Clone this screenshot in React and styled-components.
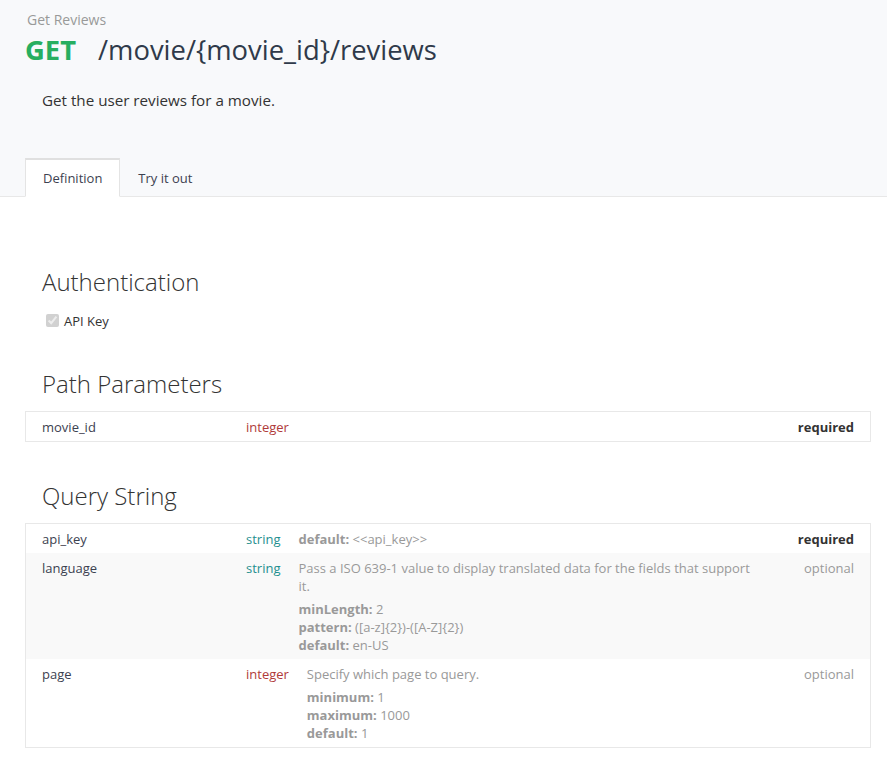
import React from "react";
import styled, { createGlobalStyle } from "styled-components";

const GlobalStyle = createGlobalStyle`
    html, body {
        margin: 0;
        padding: 0;
        background: #fff;
    }
    body {
        font-family: "Open Sans", "Liberation Sans", sans-serif;
        color: #333;
    }
`;

const Header = styled.div`
    background-color: #f8f9fb;
    border-bottom: 1px solid #e8e8e8;
    padding: 10px 0 0 0;
`;

const Crumb = styled.div`
    font-size: 14px;
    line-height: 20px;
    color: #999;
    padding-left: 27px;
`;

const EndpointLine = styled.h1`
    margin: 2px 0 0 0;
    padding-left: 25px;
    font-size: 27.4px;
    line-height: 36px;
    font-weight: 400;
    color: #2f3a4a;
    display: flex;
    align-items: baseline;
`;

const Method = styled.span`
    color: #27ae60;
    font-weight: 700;
    margin-right: 22px;
`;

const Summary = styled.p`
    margin: 22px 0 0 0;
    padding-left: 42px;
    font-size: 15.2px;
    line-height: 21px;
    color: #333;
`;

const Tabs = styled.div`
    display: flex;
    padding-left: 25px;
    margin-top: 47px;
    margin-bottom: -1px;
`;

const Tab = styled.div`
    font-size: 13px;
    line-height: 18px;
    color: #3c4150;
    padding: 9px 17px 9px 17px;
    border: 1px solid transparent;
    border-top: 2px solid transparent;
    ${(p) =>
        p.active &&
        `
        background-color: #fff;
        border-color: #e4e4e4;
        border-top-color: #e0e0e0;
        border-bottom-color: #fff;
    `}
`;

const Body = styled.div`
    padding: 68px 16px 40px 25px;
`;

const SectionTitle = styled.h2`
    margin: 0;
    padding-left: 17px;
    font-size: 24px;
    line-height: 33px;
    font-weight: 300;
    color: #333;
`;

const AuthRow = styled.label`
    display: flex;
    align-items: center;
    padding-left: 17px;
    margin-top: 13px;
    font-size: 13px;
    line-height: 18px;
    color: #333;

    input {
        margin: 3px 5px 3px 4px;
        width: 13px;
        height: 13px;
    }
`;

const Gap = styled.div`
    height: ${(p) => p.h}px;
`;

const Table = styled.div`
    border: 1px solid #e8e8e8;
    margin-top: 11px;
`;

const Row = styled.div`
    display: flex;
    align-items: flex-start;
    padding: 6px 16px 5px 16px;
    font-size: 13px;
    line-height: 18px;
    background-color: ${(p) => (p.shaded ? "#f9f9f9" : "#fff")};
`;

const Name = styled.div`
    width: 204px;
    flex-shrink: 0;
    color: #3c4150;
`;

const Type = styled.div`
    flex-shrink: 0;
    margin-right: 18px;
    color: ${(p) => (p.kind === "integer" ? "#b03a3a" : "#1f8f8f")};
`;

const Desc = styled.div`
    flex: 1;
    color: #999;
`;

const Meta = styled.div`
    margin-top: ${(p) => (p.first ? "5px" : "0")};
    color: #999;

    b {
        font-weight: 700;
        color: #999;
    }
`;

const Req = styled.div`
    width: 90px;
    flex-shrink: 0;
    text-align: right;
    color: ${(p) => (p.required ? "#333" : "#999")};
    font-weight: ${(p) => (p.required ? 700 : 400)};
`;

const queryParams = [
    {
        name: "api_key",
        type: "string",
        meta: [["default", "<<api_key>>"]],
        required: true,
    },
    {
        name: "language",
        type: "string",
        text: "Pass a ISO 639-1 value to display translated data for the fields that support it.",
        meta: [
            ["minLength", "2"],
            ["pattern", "([a-z]{2})-([A-Z]{2})"],
            ["default", "en-US"],
        ],
    },
    {
        name: "page",
        type: "integer",
        text: "Specify which page to query.",
        meta: [
            ["minimum", "1"],
            ["maximum", "1000"],
            ["default", "1"],
        ],
    },
];

const App = () => {
    return (
        <>
            <GlobalStyle />
            <Header>
                <Crumb>Get Reviews</Crumb>
                <EndpointLine>
                    <Method>GET</Method>
                    <span>/movie/{"{movie_id}"}/reviews</span>
                </EndpointLine>
                <Summary>Get the user reviews for a movie.</Summary>
                <Tabs>
                    <Tab active>Definition</Tab>
                    <Tab>Try it out</Tab>
                </Tabs>
            </Header>
            <Body>
                <SectionTitle>Authentication</SectionTitle>
                <AuthRow>
                    <input type="checkbox" checked disabled readOnly />
                    API Key
                </AuthRow>
                <Gap h={37} />
                <SectionTitle>Path Parameters</SectionTitle>
                <Table>
                    <Row>
                        <Name>movie_id</Name>
                        <Type kind="integer">integer</Type>
                        <Desc />
                        <Req required>required</Req>
                    </Row>
                </Table>
                <Gap h={37} />
                <SectionTitle>Query String</SectionTitle>
                <Table>
                    {queryParams.map((p, i) => (
                        <Row key={p.name} shaded={i % 2 === 1}>
                            <Name>{p.name}</Name>
                            <Type kind={p.type}>{p.type}</Type>
                            <Desc>
                                {p.text && <div>{p.text}</div>}
                                {p.meta.map(([k, v], j) => (
                                    <Meta key={k} first={p.text && j === 0}>
                                        <b>{k}:</b> {v}
                                    </Meta>
                                ))}
                            </Desc>
                            <Req required={p.required}>
                                {p.required ? "required" : "optional"}
                            </Req>
                        </Row>
                    ))}
                </Table>
            </Body>
        </>
    );
};

export default App;
